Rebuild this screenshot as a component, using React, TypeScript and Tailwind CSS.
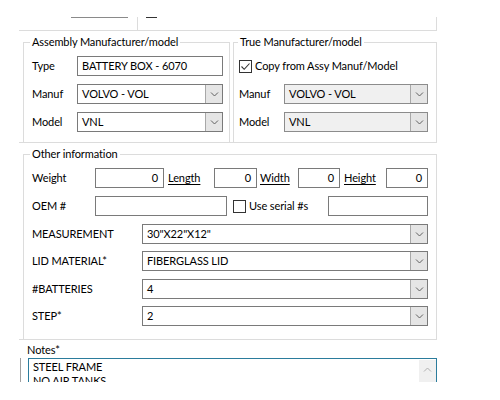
import React from "react";

const font = { fontFamily: "Lato, 'Noto Sans', sans-serif" };

function Chevron({ dir = "down", color = "#606060" }: { dir?: "down" | "up"; color?: string }) {
  return (
    <svg width="9" height="5" viewBox="0 0 9 5" fill="none">
      <path
        d={dir === "down" ? "M1 0.5 L4.5 4 L8 0.5" : "M1 4.5 L4.5 1 L8 4.5"}
        stroke={color}
        strokeWidth="1"
      />
    </svg>
  );
}

function TextBox({ value, w, right }: { value: string; w?: string; right?: boolean }) {
  return (
    <div
      className={`h-[20px] border border-[#7a7a7a] bg-white flex items-center ${w ?? "flex-1"} ${
        right ? "justify-end pr-[5px]" : "pl-[4px]"
      }`}
    >
      {value}
    </div>
  );
}

function Combo({ value, disabled }: { value: string; disabled?: boolean }) {
  return (
    <div
      className={`h-[20px] flex-1 flex border ${
        disabled ? "border-[#8c8c8c] bg-[#f0f0f0]" : "border-[#7a7a7a] bg-white"
      }`}
    >
      <div className="flex-1 flex items-center pl-[4px]">{value}</div>
      <div className="w-[17px] border-l border-[#a8a8a8] bg-[#e5e5e5] flex items-center justify-center">
        <Chevron />
      </div>
    </div>
  );
}

function Check({ checked }: { checked?: boolean }) {
  return (
    <div className="w-[13px] h-[13px] border border-[#333333] bg-white flex items-center justify-center shrink-0">
      {checked && (
        <svg width="11" height="11" viewBox="0 0 11 11" fill="none">
          <path d="M1.5 5.5 L4.2 8.3 L9.5 2.5" stroke="#333333" strokeWidth="1.1" />
        </svg>
      )}
    </div>
  );
}

function Row({ label, lw, children, mt }: { label: string; lw: string; children: React.ReactNode; mt: string }) {
  return (
    <div className={`flex items-center h-[20px] ${mt}`}>
      <div className={`${lw} shrink-0`}>{label}</div>
      {children}
    </div>
  );
}

export default function App() {
  return (
    <div
      className="w-[500px] h-[400px] bg-white overflow-hidden text-[11px] tracking-[-0.1px] text-black leading-[16px]"
      style={font}
    >
      {/* cut-off section above */}
      <div className="h-[31px] pt-[17px]">
        <div className="ml-[19px] w-[418px] h-[14px] border-b border-r border-[#dcdcdc] flex items-start">
          <div className="ml-[52px] w-[57px] h-px bg-[#8a8a8a]" />
          <div className="ml-[9px] w-px h-[13px] bg-[#dcdcdc]" />
          <div className="ml-[8px] w-[11px] h-px bg-[#333333]" />
        </div>
      </div>

      {/* manufacturer groups */}
      <div className="ml-[19px] w-[418px] border-b border-[#dcdcdc] flex pt-[3px]">
        <fieldset className="ml-[4px] w-[207px] h-[108px] border border-b-0 border-[#dcdcdc] pl-[8px] pr-[6px]">
          <legend className="ml-[-2px] px-[2px]">Assembly Manufacturer/model</legend>
          <Row label="Type" lw="w-[45px]" mt="mt-[6px]">
            <TextBox value="BATTERY BOX - 6070" />
          </Row>
          <Row label="Manuf" lw="w-[45px]" mt="mt-[8px]">
            <Combo value="VOLVO - VOL" />
          </Row>
          <Row label="Model" lw="w-[45px]" mt="mt-[8px]">
            <Combo value="VNL" />
          </Row>
        </fieldset>
        <fieldset className="ml-[3px] w-[204px] h-[108px] border border-b-0 border-[#dcdcdc] pl-[5px] pr-[8px]">
          <legend className="ml-[-1px] px-[2px]">True Manufacturer/model</legend>
          <div className="flex items-center h-[20px] mt-[6px] gap-[3px]">
            <Check checked />
            <span>Copy from Assy Manuf/Model</span>
          </div>
          <Row label="Manuf" lw="w-[45px]" mt="mt-[8px]">
            <Combo value="VOLVO - VOL" disabled />
          </Row>
          <Row label="Model" lw="w-[45px]" mt="mt-[8px]">
            <Combo value="VNL" disabled />
          </Row>
        </fieldset>
      </div>

      {/* other information */}
      <div className="ml-[19px] w-[418px] border-b border-[#dcdcdc] pt-[3px]">
        <fieldset className="ml-[4px] w-[414px] h-[193px] border border-b-0 border-[#dcdcdc] pl-[8px] pr-[8px]">
          <legend className="ml-[-2px] px-[2px]">Other information</legend>
          <Row label="Weight" lw="w-[63px]" mt="mt-[6px]">
            <TextBox value="0" w="w-[69px]" right />
            <span className="ml-[4px] w-[46px] underline underline-offset-2">Length</span>
            <TextBox value="0" w="w-[43px]" right />
            <span className="ml-[3px] w-[38px] underline underline-offset-2">Width</span>
            <TextBox value="0" w="w-[42px]" right />
            <span className="ml-[4px] w-[42px] underline underline-offset-2">Height</span>
            <TextBox value="0" w="w-[42px]" right />
          </Row>
          <Row label="OEM #" lw="w-[63px]" mt="mt-[8px]">
            <TextBox value="" w="w-[132px]" />
            <div className="ml-[6px]">
              <Check />
            </div>
            <span className="ml-[3px]">Use serial #s</span>
            <div className="ml-auto">
              <TextBox value="" w="w-[100px]" />
            </div>
          </Row>
          <Row label="MEASUREMENT" lw="w-[110px]" mt="mt-[8px]">
            <Combo value={'30"X22"X12"'} />
          </Row>
          <Row label="LID MATERIAL*" lw="w-[110px]" mt="mt-[7px]">
            <Combo value="FIBERGLASS LID" />
          </Row>
          <Row label="#BATTERIES" lw="w-[110px]" mt="mt-[8px]">
            <Combo value="4" />
          </Row>
          <Row label="STEP*" lw="w-[110px]" mt="mt-[7px]">
            <Combo value="2" />
          </Row>
        </fieldset>
      </div>

      {/* notes */}
      <div className="ml-[20px] pt-[2px]">
        <div className="pl-[7px] h-[16px]">Notes*</div>
        <div className="flex">
          <div className="w-px h-[24px] bg-[#a0a0a0]" />
          <div className="ml-[7px] w-[409px] h-[24px] border border-b-0 border-[#2b7c9c] flex overflow-hidden">
            <div className="flex-1 pl-[4px] pt-[1px] leading-[14px]">
              <div>STEEL FRAME</div>
              <div>NO AIR TANKS</div>
            </div>
            <div className="w-[17px] mt-px h-[23px] bg-[#f0f0f0] flex justify-center pt-[7px]">
              <Chevron dir="up" color="#b0b0b0" />
            </div>
          </div>
        </div>
      </div>
    </div>
  );
}
